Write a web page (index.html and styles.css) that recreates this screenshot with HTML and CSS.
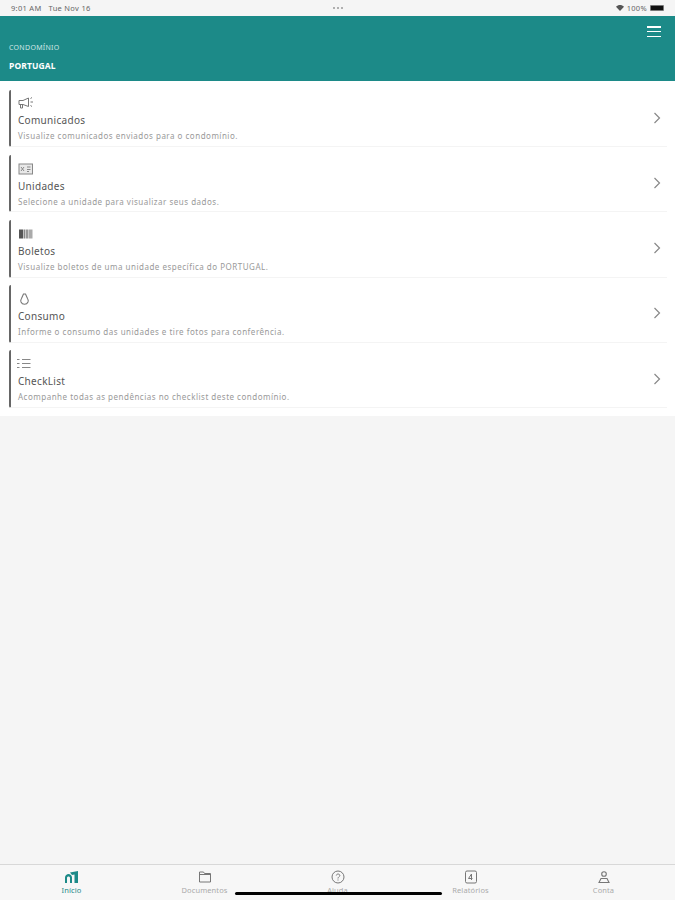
FILE: index.html
```html
<!DOCTYPE html>
<html lang="pt-BR">

<head>
  <meta charset="UTF-8">
  <meta name="viewport" content="width=device-width, initial-scale=1.0">
  <title>Condomínio Portugal</title>
  <link rel="stylesheet" href="styles.css">
</head>

<body>
  <div class="status-bar">
    <div class="status-left">
      <span>9:01 AM</span>
      <span>Tue Nov 16</span>
    </div>
    <div class="status-dots"><i></i><i></i><i></i></div>
    <div class="status-right">
      <svg class="wifi" viewBox="0 0 12 9" width="8" height="6">
        <path d="M6 9 0 2.600C3.400-.8 8.600-.8 12 2.600Z" fill="#555" />
      </svg>
      <span>100%</span>
      <span class="battery"><i></i></span>
    </div>
  </div>

  <header class="header">
    <button class="menu-button" aria-label="Menu"><i></i><i></i><i></i></button>
    <div class="header-label">CONDOMÍNIO</div>
    <div class="header-name">PORTUGAL</div>
  </header>

  <main class="list">
    <a class="item">
      <div class="item-body">
        <svg class="item-icon" viewBox="0 0 16 14" fill="none" stroke="#777" stroke-width="1">
          <path d="M1 4.500h4L10.500 2v8.500L5 8.500H1Z" />
          <path d="M2.500 8.500v3.500h2V8.500M12.500 2.500 14 1.500M12.500 6H15M12.500 9.500 14 10.500" />
        </svg>
        <div class="item-title">Comunicados</div>
        <div class="item-text">Visualize comunicados enviados para o condomínio.</div>
      </div>
      <svg class="chevron" viewBox="0 0 8 12" fill="none" stroke="#888" stroke-width="1.200">
        <path d="M1.500 1 6.500 6 1.500 11" />
      </svg>
    </a>
    <a class="item">
      <div class="item-body">
        <svg class="item-icon" viewBox="0 0 16 14" fill="none" stroke="#888" stroke-width="1">
          <rect x="1" y="2" width="13.500" height="10" fill="#e8e8e8" />
          <path d="M3 5l3 4M6 5 3 9M9 5h3.500M9 7.500h3.500M9 9.500h2" />
        </svg>
        <div class="item-title">Unidades</div>
        <div class="item-text">Selecione a unidade para visualizar seus dados.</div>
      </div>
      <svg class="chevron" viewBox="0 0 8 12" fill="none" stroke="#888" stroke-width="1.200">
        <path d="M1.500 1 6.500 6 1.500 11" />
      </svg>
    </a>
    <a class="item">
      <div class="item-body">
        <svg class="item-icon" viewBox="0 0 16 14">
          <rect x="1" y="2.500" width="4" height="9" fill="#555" />
          <rect x="5.500" y="2.500" width="1.500" height="9" fill="#888" />
          <rect x="7.500" y="2.500" width="3" height="9" fill="#999" />
          <rect x="11" y="2.500" width="3.500" height="9" fill="#aaa" />
        </svg>
        <div class="item-title">Boletos</div>
        <div class="item-text">Visualize boletos de uma unidade específica do PORTUGAL.</div>
      </div>
      <svg class="chevron" viewBox="0 0 8 12" fill="none" stroke="#888" stroke-width="1.200">
        <path d="M1.500 1 6.500 6 1.500 11" />
      </svg>
    </a>
    <a class="item">
      <div class="item-body">
        <svg class="item-icon" viewBox="0 0 16 14" fill="none" stroke="#777" stroke-width="1.100">
          <path d="M5 1.500 3 6a3.600 3.600 0 0 0-.5 3.500 3.800 3.800 0 0 0 7 0A3.600 3.600 0 0 0 9 6L7 1.500Z" transform="translate(0.500 0.500)" />
        </svg>
        <div class="item-title">Consumo</div>
        <div class="item-text">Informe o consumo das unidades e tire fotos para conferência.</div>
      </div>
      <svg class="chevron" viewBox="0 0 8 12" fill="none" stroke="#888" stroke-width="1.200">
        <path d="M1.500 1 6.500 6 1.500 11" />
      </svg>
    </a>
    <a class="item">
      <div class="item-body">
        <svg class="item-icon item-icon-left" viewBox="0 0 16 14" fill="none" stroke="#888" stroke-width="1">
          <path d="M6 2.500h8.500M6 6.500h8.500M6 10.500h8.500M1 2.500h2.500M1 6.500h2.500M1 10.500h2.500" />
        </svg>
        <div class="item-title">CheckList</div>
        <div class="item-text">Acompanhe todas as pendências no checklist deste condomínio.</div>
      </div>
      <svg class="chevron" viewBox="0 0 8 12" fill="none" stroke="#888" stroke-width="1.200">
        <path d="M1.500 1 6.500 6 1.500 11" />
      </svg>
    </a>
  </main>

  <div class="spacer"></div>

  <nav class="tabs">
    <a class="tab tab-active">
      <svg viewBox="0 0 16 14" fill="#1c8a88">
        <path d="M1 13V7.500C1 5.500 3 4 4.500 4S8 5.500 8 7.500V13H6V8C6 7 5.300 6.500 4.500 6.500S3 7 3 8v5ZM6 2.500 14 1v12h-3.500V4.500L8 5Z" />
      </svg>
      <span>Início</span>
    </a>
    <a class="tab">
      <svg viewBox="0 0 16 14" fill="none" stroke="#777" stroke-width="1">
        <path d="M2.500 12V2h4l1 1.500h6V12ZM2.500 4.500h11" />
      </svg>
      <span>Documentos</span>
    </a>
    <a class="tab">
      <svg viewBox="0 0 16 14" fill="none" stroke="#777" stroke-width="1">
        <circle cx="8" cy="7" r="6" />
        <path d="M6.300 5.500C6.500 3.500 9.800 3.600 9.800 5.500 9.800 6.800 8 6.800 8 8.500M8 9.500v1" />
      </svg>
      <span>Ajuda</span>
    </a>
    <a class="tab">
      <svg viewBox="0 0 16 14" fill="none" stroke="#777" stroke-width="1">
        <rect x="2.500" y="1" width="11" height="12" rx="1.500" />
        <path d="M8.500 4 5.500 8.500h4M8.500 4v6" />
      </svg>
      <span>Relatórios</span>
    </a>
    <a class="tab">
      <svg viewBox="0 0 16 14" fill="none" stroke="#777" stroke-width="1.100">
        <circle cx="8" cy="4" r="2.300" />
        <path d="M3 12.500 5 8.500h6l2 4Z" />
      </svg>
      <span>Conta</span>
    </a>
  </nav>
  <div class="home-indicator"></div>
</body>

</html>
```

FILE: styles.css
```css
html,
body {
  height: 100%;
}

body {
  margin: 0;
  display: flex;
  flex-direction: column;
  background-color: #f5f5f5;
  font-family: 'Noto Sans', sans-serif;
  color: #444;
  overflow: hidden;
}

.status-bar {
  height: 16px;
  padding: 0 11px;
  display: grid;
  grid-template-columns: 1fr auto 1fr;
  align-items: center;
  font-size: 7.500px;
  letter-spacing: 0.300px;
  color: #666;
}

.status-left {
  display: flex;
  gap: 7px;
}

.status-dots {
  display: flex;
  gap: 2px;
}

.status-dots i {
  width: 2px;
  height: 2px;
  border-radius: 50%;
  background-color: #999;
}

.status-right {
  display: flex;
  align-items: center;
  justify-content: flex-end;
  gap: 3px;
}

.battery {
  width: 14px;
  height: 6px;
  padding: 1px;
  box-sizing: border-box;
  border-radius: 1px;
  background-color: #777;
}

.battery i {
  display: block;
  height: 100%;
  background-color: #111;
}

.header {
  position: relative;
  height: 65px;
  padding-left: 9px;
  box-sizing: border-box;
  background-color: #1c8a88;
  color: white;
}

.header-label {
  padding-top: 27px;
  font-size: 7px;
  line-height: 10px;
  letter-spacing: 0.300px;
  color: #cfe6e5;
}

.header-name {
  margin-top: 8px;
  font-size: 8.500px;
  line-height: 10px;
  font-weight: 700;
  letter-spacing: 0.100px;
}

.menu-button {
  position: absolute;
  top: 10px;
  right: 14px;
  width: 14px;
  height: 11px;
  padding: 0;
  border: none;
  background: none;
  display: flex;
  flex-direction: column;
  justify-content: space-between;
}

.menu-button i {
  display: block;
  height: 1.500px;
  background-color: white;
}

.list {
  padding: 8.500px 8px 8.500px 9px;
  display: flex;
  flex-direction: column;
  gap: 7.500px;
  background-color: white;
}

.item {
  height: 57.700px;
  box-sizing: border-box;
  padding-left: 7px;
  padding-right: 6px;
  display: flex;
  align-items: center;
  justify-content: space-between;
  border-left: 2px solid #666;
  border-bottom: 1px solid #f4f4f4;
  border-radius: 2px 0 0 2px;
}

.item-body {
  padding-top: 2px;
}

.item-icon {
  display: block;
  width: 16px;
  height: 14px;
  margin-bottom: 4px;
}

.item-icon-left {
  margin-left: -2px;
}

.item-title {
  font-size: 10px;
  line-height: 13px;
  letter-spacing: 0.300px;
  color: #555;
}

.item-text {
  margin-top: 3px;
  font-size: 8px;
  line-height: 11px;
  letter-spacing: 0.500px;
  color: #999;
}

.chevron {
  width: 8px;
  height: 12px;
}

.spacer {
  flex: 1;
}

.tabs {
  height: 35px;
  padding: 0 5px;
  display: flex;
  border-top: 1px solid #d8d8d8;
  background-color: #f7f7f7;
}

.tab {
  flex: 1;
  padding-top: 5px;
  display: flex;
  flex-direction: column;
  align-items: center;
  gap: 2px;
  font-size: 7.500px;
  line-height: 9px;
  letter-spacing: 0.100px;
  color: #aaa;
}

.tab svg {
  width: 16px;
  height: 14px;
}

.tab-active {
  color: #1c8a88;
}

.home-indicator {
  position: absolute;
  left: 235px;
  bottom: 5px;
  width: 207px;
  height: 3px;
  border-radius: 2px;
  background-color: black;
}
```
